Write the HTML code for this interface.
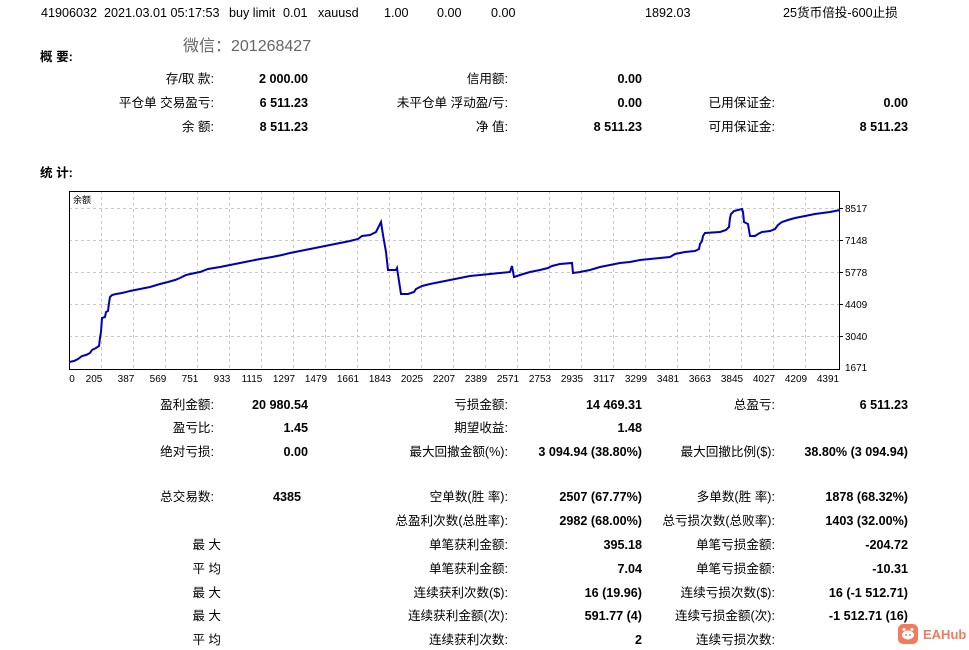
<!DOCTYPE html>
<html><head><meta charset="utf-8">
<style>
*{margin:0;padding:0;box-sizing:border-box}
body{width:969px;height:650px;background:#fff;position:relative;overflow:hidden;font-family:"Liberation Sans","Noto Sans CJK SC",sans-serif;font-size:12.6px;color:#000}
div.t{position:absolute;white-space:nowrap;line-height:14px}
.r{text-align:right}
.b{font-weight:bold}
</style></head><body>
<div class="t" style="left:41px;top:6px">41906032</div>
<div class="t" style="left:104px;top:6px">2021.03.01 05:17:53</div>
<div class="t" style="left:229px;top:6px">buy limit</div>
<div class="t" style="left:283px;top:6px">0.01</div>
<div class="t" style="left:318px;top:6px">xauusd</div>
<div class="t" style="left:384px;top:6px">1.00</div>
<div class="t" style="left:437px;top:6px">0.00</div>
<div class="t" style="left:491px;top:6px">0.00</div>
<div class="t" style="left:645px;top:6px">1892.03</div>
<div class="t" style="left:783px;top:6px">25货币倍投-600止损</div>
<div class="t" style="left:183px;top:38px;font-size:16px;line-height:18px;color:#666">微信：201268427</div>
<div class="t b" style="left:40px;top:50px">概 要:</div>

<div class="t r" style="right:755px;top:72px">存/取 款:</div>
<div class="t r b" style="right:661px;top:72px">2 000.00</div>
<div class="t r" style="right:461px;top:72px">信用额:</div>
<div class="t r b" style="right:327px;top:72px">0.00</div>

<div class="t r" style="right:755px;top:96px">平仓单 交易盈亏:</div>
<div class="t r b" style="right:661px;top:96px">6 511.23</div>
<div class="t r" style="right:461px;top:96px">未平仓单 浮动盈/亏:</div>
<div class="t r b" style="right:327px;top:96px">0.00</div>
<div class="t r" style="right:194px;top:96px">已用保证金:</div>
<div class="t r b" style="right:61px;top:96px">0.00</div>

<div class="t r" style="right:755px;top:120px">余 额:</div>
<div class="t r b" style="right:661px;top:120px">8 511.23</div>
<div class="t r" style="right:461px;top:120px">净 值:</div>
<div class="t r b" style="right:327px;top:120px">8 511.23</div>
<div class="t r" style="right:194px;top:120px">可用保证金:</div>
<div class="t r b" style="right:61px;top:120px">8 511.23</div>

<div class="t b" style="left:40px;top:166px">统 计:</div>

<svg style="position:absolute;left:0;top:0" width="969" height="390">
<g stroke="#c8c8c8" stroke-dasharray="3,3" stroke-width="1">
<line x1="69" y1="208.5" x2="840" y2="208.5"/><line x1="69" y1="240.5" x2="840" y2="240.5"/><line x1="69" y1="272.5" x2="840" y2="272.5"/><line x1="69" y1="304.5" x2="840" y2="304.5"/><line x1="69" y1="336.5" x2="840" y2="336.5"/>
<line x1="101.5" y1="191" x2="101.5" y2="370"/><line x1="133.5" y1="191" x2="133.5" y2="370"/><line x1="165.5" y1="191" x2="165.5" y2="370"/><line x1="197.5" y1="191" x2="197.5" y2="370"/><line x1="229.5" y1="191" x2="229.5" y2="370"/><line x1="261.5" y1="191" x2="261.5" y2="370"/><line x1="293.5" y1="191" x2="293.5" y2="370"/><line x1="325.5" y1="191" x2="325.5" y2="370"/><line x1="357.5" y1="191" x2="357.5" y2="370"/><line x1="389.5" y1="191" x2="389.5" y2="370"/><line x1="421.5" y1="191" x2="421.5" y2="370"/><line x1="453.5" y1="191" x2="453.5" y2="370"/><line x1="485.5" y1="191" x2="485.5" y2="370"/><line x1="517.5" y1="191" x2="517.5" y2="370"/><line x1="549.5" y1="191" x2="549.5" y2="370"/><line x1="581.5" y1="191" x2="581.5" y2="370"/><line x1="613.5" y1="191" x2="613.5" y2="370"/><line x1="645.5" y1="191" x2="645.5" y2="370"/><line x1="677.5" y1="191" x2="677.5" y2="370"/><line x1="709.5" y1="191" x2="709.5" y2="370"/><line x1="741.5" y1="191" x2="741.5" y2="370"/><line x1="773.5" y1="191" x2="773.5" y2="370"/><line x1="805.5" y1="191" x2="805.5" y2="370"/>
</g>
<rect x="69.5" y="191.5" width="770" height="178" fill="none" stroke="#000" stroke-width="1"/>
<polyline fill="none" stroke="#0000b4" stroke-width="2" points="69,362 74,361 78,359 82,356 86,355 90,353 92,350 96,348 99,346 100,338 101,332 102,318 105,317 106,312 108,311 109,303 110,297 112,295 116,294 122,293 130,291 140,289 150,287 160,284 168,282 175,280 180,278 186,275 195,273 200,272 208,269 220,267 230,265 240,263 250,261 260,259 272,257 282,255 290,253 300,251 310,249 320,247 330,245 340,243 350,241 358,239 362,236 370,235 376,232 381,222 383,235 386,252 388,270 396,270 397,268 401,294 408,294 414,292 416,289 422,286 430,284 440,282 450,280 460,278 470,276 480,275 490,274 500,273 510,272 512,266 514,277 520,275 530,272 540,270 548,268 552,266 560,264 572,263 573,273 580,272 590,270 600,267 610,265 620,263 630,262 640,260 650,259 660,258 670,257 675,254 685,252 695,251 699,249 700,244 702,241 703,236 705,233 720,232 726,230 729,227 730,218 731,214 734,211 742,209 743,212 744,222 748,224 750,236 755,236 758,234 762,232 770,231 775,229 778,225 782,222 788,220 795,218 805,216 815,214 830,212 840,210"/>
<text x="73" y="203" font-size="9" font-family="Liberation Sans,Noto Sans CJK SC,sans-serif">余额</text>
<g font-size="10" font-family="Liberation Sans,sans-serif">
<text x="845" y="212">8517</text><text x="845" y="244">7148</text><text x="845" y="276">5778</text><text x="845" y="308">4409</text><text x="845" y="340">3040</text><text x="845" y="371">1671</text>
</g>
<g stroke="#000"><line x1="840" y1="208.5" x2="843" y2="208.5"/><line x1="840" y1="240.5" x2="843" y2="240.5"/><line x1="840" y1="272.5" x2="843" y2="272.5"/><line x1="840" y1="304.5" x2="843" y2="304.5"/><line x1="840" y1="336.5" x2="843" y2="336.5"/></g>
<g font-size="10" font-family="Liberation Sans,sans-serif" text-anchor="middle">
<text x="72" y="382">0</text><text x="94" y="382">205</text><text x="126" y="382">387</text><text x="158" y="382">569</text><text x="190" y="382">751</text><text x="222" y="382">933</text><text x="252" y="382">1115</text><text x="284" y="382">1297</text><text x="316" y="382">1479</text><text x="348" y="382">1661</text><text x="380" y="382">1843</text><text x="412" y="382">2025</text><text x="444" y="382">2207</text><text x="476" y="382">2389</text><text x="508" y="382">2571</text><text x="540" y="382">2753</text><text x="572" y="382">2935</text><text x="604" y="382">3117</text><text x="636" y="382">3299</text><text x="668" y="382">3481</text><text x="700" y="382">3663</text><text x="732" y="382">3845</text><text x="764" y="382">4027</text><text x="796" y="382">4209</text><text x="828" y="382">4391</text>
</g>
</svg>

<div class="t r" style="right:755px;top:398px">盈利金额:</div>
<div class="t r b" style="right:661px;top:398px">20 980.54</div>
<div class="t r" style="right:461px;top:398px">亏损金额:</div>
<div class="t r b" style="right:327px;top:398px">14 469.31</div>
<div class="t r" style="right:194px;top:398px">总盈亏:</div>
<div class="t r b" style="right:61px;top:398px">6 511.23</div>

<div class="t r" style="right:755px;top:421px">盈亏比:</div>
<div class="t r b" style="right:661px;top:421px">1.45</div>
<div class="t r" style="right:461px;top:421px">期望收益:</div>
<div class="t r b" style="right:327px;top:421px">1.48</div>

<div class="t r" style="right:755px;top:445px">绝对亏损:</div>
<div class="t r b" style="right:661px;top:445px">0.00</div>
<div class="t r" style="right:461px;top:445px">最大回撤金额(%):</div>
<div class="t r b" style="right:327px;top:445px">3 094.94 (38.80%)</div>
<div class="t r" style="right:194px;top:445px">最大回撤比例($):</div>
<div class="t r b" style="right:61px;top:445px">38.80% (3 094.94)</div>

<div class="t r" style="right:755px;top:490px">总交易数:</div>
<div class="t b" style="left:273px;top:490px">4385</div>
<div class="t r" style="right:461px;top:490px">空单数(胜 率):</div>
<div class="t r b" style="right:327px;top:490px">2507 (67.77%)</div>
<div class="t r" style="right:194px;top:490px">多单数(胜 率):</div>
<div class="t r b" style="right:61px;top:490px">1878 (68.32%)</div>

<div class="t r" style="right:461px;top:514px">总盈利次数(总胜率):</div>
<div class="t r b" style="right:327px;top:514px">2982 (68.00%)</div>
<div class="t r" style="right:194px;top:514px">总亏损次数(总败率):</div>
<div class="t r b" style="right:61px;top:514px">1403 (32.00%)</div>

<div class="t r" style="right:748px;top:538px">最 大</div>
<div class="t r" style="right:461px;top:538px">单笔获利金额:</div>
<div class="t r b" style="right:327px;top:538px">395.18</div>
<div class="t r" style="right:194px;top:538px">单笔亏损金额:</div>
<div class="t r b" style="right:61px;top:538px">-204.72</div>

<div class="t r" style="right:748px;top:562px">平 均</div>
<div class="t r" style="right:461px;top:562px">单笔获利金额:</div>
<div class="t r b" style="right:327px;top:562px">7.04</div>
<div class="t r" style="right:194px;top:562px">单笔亏损金额:</div>
<div class="t r b" style="right:61px;top:562px">-10.31</div>

<div class="t r" style="right:748px;top:586px">最 大</div>
<div class="t r" style="right:461px;top:586px">连续获利次数($):</div>
<div class="t r b" style="right:327px;top:586px">16 (19.96)</div>
<div class="t r" style="right:194px;top:586px">连续亏损次数($):</div>
<div class="t r b" style="right:61px;top:586px">16 (-1 512.71)</div>

<div class="t r" style="right:748px;top:609px">最 大</div>
<div class="t r" style="right:461px;top:609px">连续获利金额(次):</div>
<div class="t r b" style="right:327px;top:609px">591.77 (4)</div>
<div class="t r" style="right:194px;top:609px">连续亏损金额(次):</div>
<div class="t r b" style="right:61px;top:609px">-1 512.71 (16)</div>

<div class="t r" style="right:748px;top:633px">平 均</div>
<div class="t r" style="right:461px;top:633px">连续获利次数:</div>
<div class="t r b" style="right:327px;top:633px">2</div>
<div class="t r" style="right:194px;top:633px">连续亏损次数:</div>

<div style="position:absolute;left:898px;top:624px;width:20px;height:20px;background:#f27a5e;border-radius:5px">
<svg width="20" height="20"><ellipse cx="10" cy="11" rx="6" ry="4.5" fill="#fff"/><circle cx="6" cy="5.5" r="1.5" fill="#fff"/><circle cx="14" cy="5.5" r="1.5" fill="#fff"/><circle cx="8" cy="11" r="1" fill="#f27a5e"/><circle cx="12" cy="11" r="1" fill="#f27a5e"/></svg>
</div>
<div class="t b" style="left:923px;top:628px;color:#f27a5e;font-size:13px">EAHub</div>
</body></html>
